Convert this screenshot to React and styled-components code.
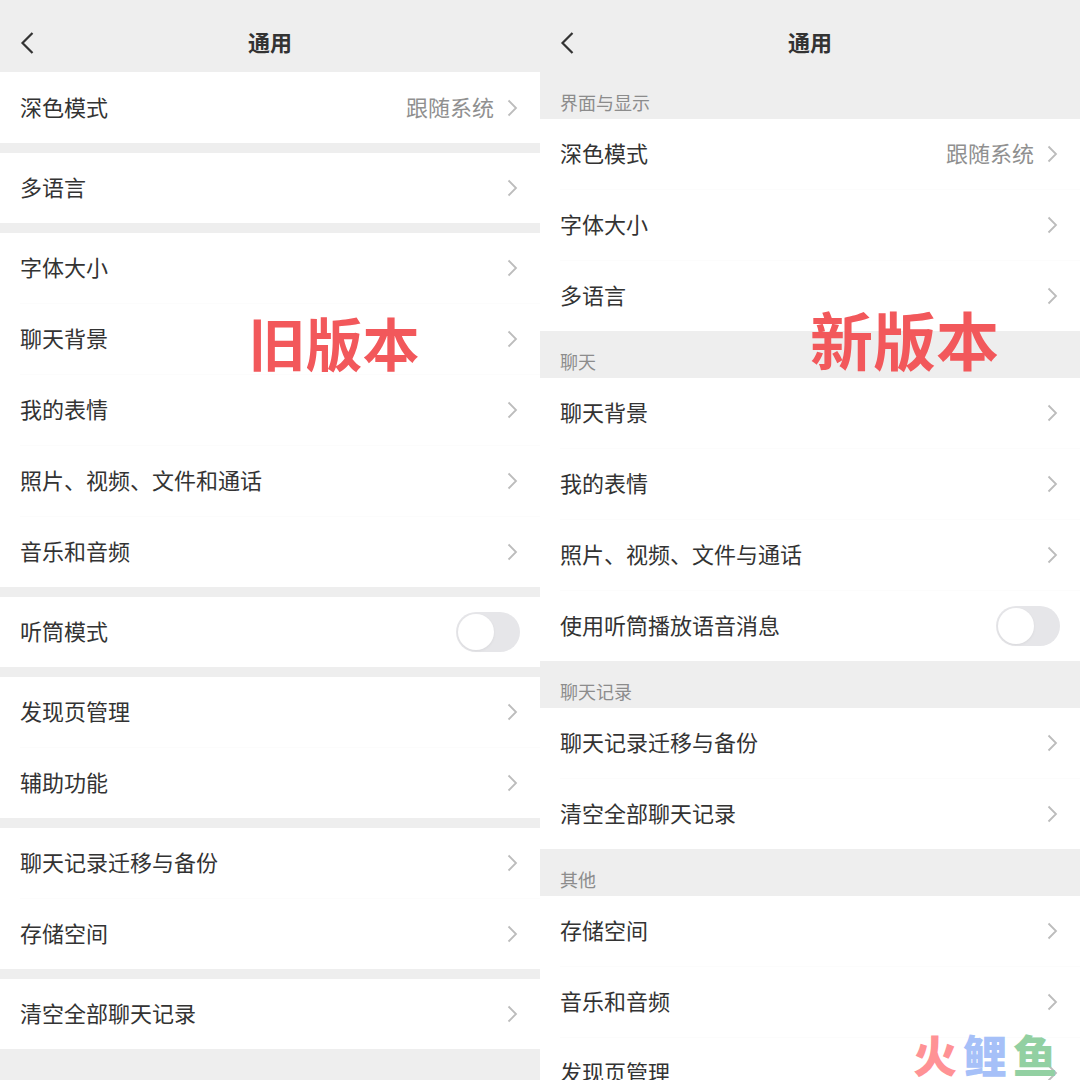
import React, { useState } from 'react';
import styled, { createGlobalStyle } from 'styled-components';

const GlobalStyle = createGlobalStyle`
  * {
    box-sizing: border-box;
  }

  body {
    margin: 0;
    background: #eee;
    font-family: 'Noto Sans CJK SC', 'Noto Sans', sans-serif;
    color: #333;
  }

  button {
    font: inherit;
    color: inherit;
    border: none;
    cursor: pointer;
  }
`;

const Compare = styled.main`
  position: relative;
  display: grid;
  grid-template-columns: repeat(2, minmax(0, 1fr));
  height: 100vh;
  overflow: hidden;
`;

const Panel = styled.section`
  position: relative;
  min-height: 0;
  overflow: hidden;
  background: #eee;
`;

const Header = styled.header`
  display: grid;
  grid-template-columns: 40px 1fr 40px;
  align-items: center;
  height: 72px;
  padding: 14px 14px 0;
`;

const BackButton = styled.button`
  display: flex;
  padding: 6px;
  background: none;
`;

const Title = styled.h1`
  margin: 0;
  padding-bottom: 4px;
  font-size: 22px;
  line-height: 32px;
  font-weight: 700;
  text-align: center;
`;

const List = styled.div`
  display: flex;
  flex-direction: column;
  gap: ${props => props.$gap || '0'};
  border-top: ${props => (props.$gap ? '1px solid #fff' : 'none')};
`;

const Group = styled.div`
  background: #fff;
`;

const GroupTitle = styled.h2`
  display: flex;
  align-items: flex-end;
  height: 47px;
  margin: 0;
  padding: 0 20px 4px;
  background: #eee;
  color: #8c8c8c;
  font-size: 18px;
  line-height: 26px;
  font-weight: 400;
`;

const Row = styled.button`
  display: flex;
  align-items: center;
  width: 100%;
  height: 70px;
  padding: 0 20px;
  background: #fff;
  font-size: 22px;
  line-height: 32px;
  text-align: left;
`;

const Divider = styled.hr`
  height: 1px;
  margin: 0 0 0 20px;
  border: none;
  background: #fcfcfc;
`;

const Label = styled.span`
  flex: 1;
  padding-bottom: 4px;
`;

const Value = styled.span`
  margin-right: 12px;
  padding-bottom: 4px;
  color: #909090;
`;

const Switch = styled.input`
  appearance: none;
  display: flex;
  align-items: center;
  width: 64px;
  height: 40px;
  margin: 0;
  padding: 2px;
  border-radius: 20px;
  background: ${props => (props.checked ? '#07c160' : '#e6e6e9')};
  cursor: pointer;

  &::before {
    content: '';
    width: 36px;
    height: 36px;
    margin-left: ${props => (props.checked ? '24px' : '0')};
    border-radius: 50%;
    background: #fff;
    box-shadow: 0 1px 3px rgba(0, 0, 0, 0.06);
  }
`;

const VersionTag = styled.strong`
  position: absolute;
  top: ${props => props.$top};
  left: ${props => props.$left};
  color: #f2585b;
  font-size: ${props => props.$size};
  line-height: 1;
  font-weight: 700;
  pointer-events: none;
`;

const Watermark = styled.div`
  position: absolute;
  right: 23px;
  bottom: 4px;
  display: flex;
  gap: 6px;
  font-size: 44px;
  line-height: 44px;
  font-weight: 900;
  pointer-events: none;
`;

const WatermarkChar = styled.span`
  color: ${props => props.$color};
`;

const BackIcon = () => (
  <svg width="16" height="24" viewBox="0 0 16 24" fill="none" aria-hidden="true">
    <path d="M12.5 2 L2.5 12 L12.5 22" stroke="#333" strokeWidth="2.2" />
  </svg>
);

const ChevronIcon = () => (
  <svg width="14" height="20" viewBox="0 0 14 20" fill="none" aria-hidden="true">
    <path d="M2.5 2.5 L10 10 L2.5 17.5" stroke="#bcbcbc" strokeWidth="1.8" />
  </svg>
);

const oldGroups = [
  { items: [{ label: '深色模式', value: '跟随系统' }] },
  { items: [{ label: '多语言' }] },
  {
    items: [
      { label: '字体大小' },
      { label: '聊天背景' },
      { label: '我的表情' },
      { label: '照片、视频、文件和通话' },
      { label: '音乐和音频' }
    ]
  },
  { items: [{ label: '听筒模式', toggle: true }] },
  { items: [{ label: '发现页管理' }, { label: '辅助功能' }] },
  { items: [{ label: '聊天记录迁移与备份' }, { label: '存储空间' }] },
  { items: [{ label: '清空全部聊天记录' }] }
];

const newGroups = [
  {
    title: '界面与显示',
    items: [
      { label: '深色模式', value: '跟随系统' },
      { label: '字体大小' },
      { label: '多语言' }
    ]
  },
  {
    title: '聊天',
    items: [
      { label: '聊天背景' },
      { label: '我的表情' },
      { label: '照片、视频、文件与通话' },
      { label: '使用听筒播放语音消息', toggle: true }
    ]
  },
  {
    title: '聊天记录',
    items: [{ label: '聊天记录迁移与备份' }, { label: '清空全部聊天记录' }]
  },
  {
    title: '其他',
    items: [{ label: '存储空间' }, { label: '音乐和音频' }, { label: '发现页管理' }]
  }
];

const SettingRow = ({ item }) => {
  const [checked, setChecked] = useState(false);

  if (item.toggle) {
    return (
      <Row as="label">
        <Label>{item.label}</Label>
        <Switch
          type="checkbox"
          checked={checked}
          onChange={e => setChecked(e.target.checked)}
        />
      </Row>
    );
  }

  return (
    <Row type="button">
      <Label>{item.label}</Label>
      {item.value && <Value>{item.value}</Value>}
      <ChevronIcon />
    </Row>
  );
};

const SettingsPanel = ({ groups, gap, children }) => (
  <Panel>
    <Header>
      <BackButton type="button" aria-label="返回">
        <BackIcon />
      </BackButton>
      <Title>通用</Title>
    </Header>
    <List $gap={gap}>
      {groups.map((group, index) => (
        <Group key={index}>
          {group.title && <GroupTitle>{group.title}</GroupTitle>}
          {group.items.map((item, i) => (
            <React.Fragment key={item.label}>
              {i > 0 && <Divider />}
              <SettingRow item={item} />
            </React.Fragment>
          ))}
        </Group>
      ))}
    </List>
    {children}
  </Panel>
);

const App = () => (
  <>
    <GlobalStyle />
    <Compare>
      <SettingsPanel groups={oldGroups} gap="10px">
        <VersionTag $top="313px" $left="46%" $size="57px">旧版本</VersionTag>
      </SettingsPanel>
      <SettingsPanel groups={newGroups}>
        <VersionTag $top="306px" $left="50%" $size="63px">新版本</VersionTag>
      </SettingsPanel>
      <Watermark>
        <WatermarkChar $color="#ff9295">火</WatermarkChar>
        <WatermarkChar $color="#a6c0f8">鲤</WatermarkChar>
        <WatermarkChar $color="#92d0a2">鱼</WatermarkChar>
      </Watermark>
    </Compare>
  </>
);

export default App;
